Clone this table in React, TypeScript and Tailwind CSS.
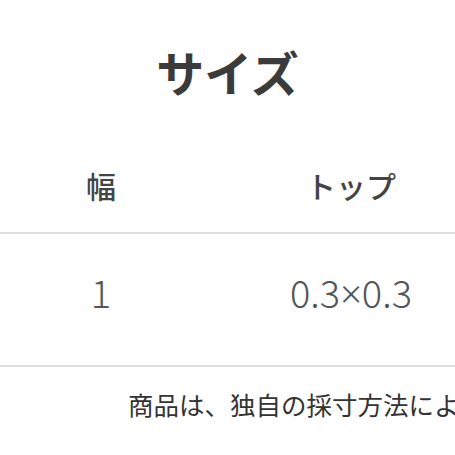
const cjk = "font-['Noto_Sans_CJK_JP',sans-serif]";

export default function App() {
  return (
    <div className={`w-[455px] h-[455px] overflow-hidden bg-white ${cjk}`}>
      <h2 className="pt-[45px] text-center text-[48px] leading-[52px] font-bold text-[#3b3b3b]">
        サイズ
      </h2>
      <div className="flex w-[500px] pt-[73px] pb-[32px] border-b-2 border-[#dddddd] text-[30px] leading-[30px] font-medium text-[#444444]">
        <div className="w-[202px] text-center">幅</div>
        <div className="w-[298px] text-center">トップ</div>
      </div>
      <div className="flex w-[500px] pt-[39px] pb-[53px] border-b-2 border-[#dddddd] text-[38px] leading-[38px] font-light text-[#555555]">
        <div className="w-[202px] text-center">1</div>
        <div className="w-[298px] text-center">
          0.3<span className="font-['Noto_Sans',sans-serif] text-[38px]">×</span>0.3
        </div>
      </div>
      <p className="pt-[24px] pl-[128px] whitespace-nowrap text-[25.5px] leading-[26px] text-[#333333]">
        商品は、独自の採寸方法により採寸しています。
      </p>
    </div>
  );
}
